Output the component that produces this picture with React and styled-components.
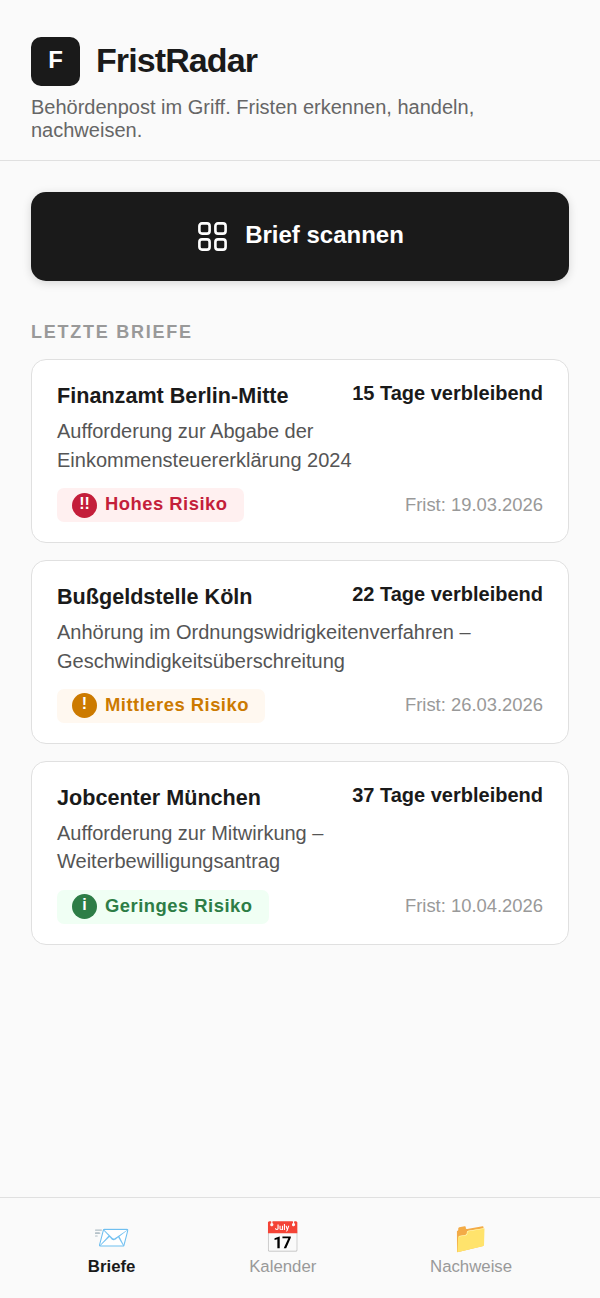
import React from "react";
import styled, { createGlobalStyle } from "styled-components";

const GlobalStyle = createGlobalStyle`
  * { box-sizing: border-box; }
  html, body { margin: 0; padding: 0; }
  body {
    background: #fafafa;
    font-family: "Liberation Sans", Arial, sans-serif;
  }
`;

const Page = styled.div`
  min-height: 100vh;
  display: flex;
  flex-direction: column;
  background: #fafafa;
`;

const Header = styled.header`
  padding: 37px 31px 18px;
  border-bottom: 1px solid #e0e0e0;
`;

const Brand = styled.div`
  display: flex;
  align-items: center;
  gap: 16px;
  margin-bottom: 10px;
`;

const Logo = styled.div`
  width: 49px;
  height: 49px;
  border-radius: 10px;
  background: #1a1a1a;
  color: #fff;
  display: flex;
  align-items: center;
  justify-content: center;
  font-size: 24px;
  font-weight: 700;
  padding-bottom: 4px;
`;

const Title = styled.h1`
  margin: 0;
  padding-bottom: 2px;
  font-size: 34px;
  font-weight: 700;
  letter-spacing: -0.9px;
  color: #1a1a1a;
`;

const Tagline = styled.p`
  margin: 0;
  font-size: 20px;
  line-height: 23px;
  color: #666;
  max-width: 480px;
`;

const Main = styled.main`
  flex: 1;
  padding: 31px 31px 0;
`;

const ScanButton = styled.button`
  width: 100%;
  height: 89px;
  padding: 0 0 0 2px;
  border: none;
  border-radius: 15px;
  background: #1a1a1a;
  color: #fff;
  display: flex;
  align-items: center;
  justify-content: center;
  gap: 18px;
  font-family: inherit;
  font-size: 24px;
  font-weight: 700;
  box-shadow: 0 2px 10px rgba(0, 0, 0, 0.15);
`;

const ScanLabel = styled.span`
  padding-bottom: 4px;
`;

const SectionLabel = styled.h2`
  margin: 41px 0 16px;
  font-size: 18px;
  line-height: 21px;
  font-weight: 700;
  letter-spacing: 1.75px;
  color: #999;
`;

const CardList = styled.div`
  display: flex;
  flex-direction: column;
  gap: 16.5px;
`;

const Card = styled.article`
  height: 184.4px;
  padding: 20px 25px 0;
  background: #fff;
  border: 1px solid #e0e0e0;
  border-radius: 15px;
`;

const CardTop = styled.div`
  display: flex;
  justify-content: space-between;
  align-items: flex-start;
`;

const Sender = styled.h3`
  margin: 0;
  padding-top: 3px;
  font-size: 21.6px;
  line-height: 26px;
  font-weight: 700;
  color: #1a1a1a;
`;

const Remaining = styled.span`
  font-size: 20px;
  line-height: 26px;
  font-weight: 700;
  color: #1a1a1a;
  white-space: nowrap;
`;

const Subject = styled.p`
  margin: 8.3px 0 13.9px;
  font-size: 20px;
  line-height: 28.4px;
  color: #555;
`;

const CardBottom = styled.div`
  display: flex;
  justify-content: space-between;
  align-items: center;
`;

const tones = {
  high: { bg: "#fff0f0", fg: "#c41e3a" },
  medium: { bg: "#fff8f0", fg: "#cc7a00" },
  low: { bg: "#f0fff4", fg: "#2d7d46" },
};

const Badge = styled.div`
  display: flex;
  align-items: center;
  gap: 8px;
  height: 34px;
  padding: 0 16px 0 15px;
  border-radius: 7px;
  background: ${(props) => tones[props.$tone].bg};
  color: ${(props) => tones[props.$tone].fg};
  font-size: 18.4px;
  font-weight: 700;
  letter-spacing: 0.5px;
`;

const BadgeIcon = styled.span`
  width: 25px;
  height: 25px;
  border-radius: 50%;
  background: ${(props) => tones[props.$tone].fg};
  color: #fff;
  display: flex;
  align-items: center;
  justify-content: center;
  font-size: 16px;
  font-weight: 700;
  letter-spacing: 0;
  padding-bottom: 3px;
`;

const BadgeText = styled.span`
  padding-bottom: 2px;
`;

const Deadline = styled.span`
  font-size: 18.4px;
  color: #999;
  padding-bottom: 1px;
`;

const BottomNav = styled.nav`
  height: 101px;
  display: flex;
  justify-content: space-around;
  padding: 0 31px;
  border-top: 1px solid #e0e0e0;
  background: #fafafa;
`;

const NavItem = styled.div`
  display: flex;
  flex-direction: column;
  align-items: center;
  padding-top: 22px;
  color: ${(props) => (props.$active ? "#1a1a1a" : "#999")};
  font-size: 16.8px;
  font-weight: ${(props) => (props.$active ? 700 : 400)};
`;

const NavIcon = styled.span`
  font-size: 30px;
  line-height: 35px;
  height: 37px;
  font-family: "Noto Color Emoji", sans-serif;
`;

const NavLabel = styled.span`
  line-height: 20px;
`;

function ScanIcon() {
  return (
    <svg width="29" height="29" viewBox="0 0 29 29" fill="none" stroke="#fff" strokeWidth="2.6">
      <rect x="1.4" y="1.4" width="10.2" height="10.2" rx="2.6" />
      <rect x="17.4" y="1.4" width="10.2" height="10.2" rx="2.6" />
      <rect x="1.4" y="17.4" width="10.2" height="10.2" rx="2.6" />
      <rect x="17.4" y="17.4" width="10.2" height="10.2" rx="2.6" />
    </svg>
  );
}

const letters = [
  {
    sender: "Finanzamt Berlin-Mitte",
    days: "15 Tage verbleibend",
    subject: ["Aufforderung zur Abgabe der", "Einkommensteuererklärung 2024"],
    tone: "high",
    mark: "!!",
    risk: "Hohes Risiko",
    deadline: "Frist: 19.03.2026",
  },
  {
    sender: "Bußgeldstelle Köln",
    days: "22 Tage verbleibend",
    subject: ["Anhörung im Ordnungswidrigkeitenverfahren –", "Geschwindigkeitsüberschreitung"],
    tone: "medium",
    mark: "!",
    risk: "Mittleres Risiko",
    deadline: "Frist: 26.03.2026",
  },
  {
    sender: "Jobcenter München",
    days: "37 Tage verbleibend",
    subject: ["Aufforderung zur Mitwirkung –", "Weiterbewilligungsantrag"],
    tone: "low",
    mark: "i",
    risk: "Geringes Risiko",
    deadline: "Frist: 10.04.2026",
  },
];

export default function App() {
  return (
    <Page>
      <GlobalStyle />
      <Header>
        <Brand>
          <Logo>F</Logo>
          <Title>FristRadar</Title>
        </Brand>
        <Tagline>Behördenpost im Griff. Fristen erkennen, handeln, nachweisen.</Tagline>
      </Header>
      <Main>
        <ScanButton>
          <ScanIcon />
          <ScanLabel>Brief scannen</ScanLabel>
        </ScanButton>
        <SectionLabel>LETZTE BRIEFE</SectionLabel>
        <CardList>
          {letters.map((letter) => (
            <Card key={letter.sender}>
              <CardTop>
                <Sender>{letter.sender}</Sender>
                <Remaining>{letter.days}</Remaining>
              </CardTop>
              <Subject>
                {letter.subject[0]}
                <br />
                {letter.subject[1]}
              </Subject>
              <CardBottom>
                <Badge $tone={letter.tone}>
                  <BadgeIcon $tone={letter.tone}>{letter.mark}</BadgeIcon>
                  <BadgeText>{letter.risk}</BadgeText>
                </Badge>
                <Deadline>{letter.deadline}</Deadline>
              </CardBottom>
            </Card>
          ))}
        </CardList>
      </Main>
      <BottomNav>
        <NavItem $active>
          <NavIcon>📨</NavIcon>
          <NavLabel>Briefe</NavLabel>
        </NavItem>
        <NavItem>
          <NavIcon>📅</NavIcon>
          <NavLabel>Kalender</NavLabel>
        </NavItem>
        <NavItem>
          <NavIcon>📁</NavIcon>
          <NavLabel>Nachweise</NavLabel>
        </NavItem>
      </BottomNav>
    </Page>
  );
}
